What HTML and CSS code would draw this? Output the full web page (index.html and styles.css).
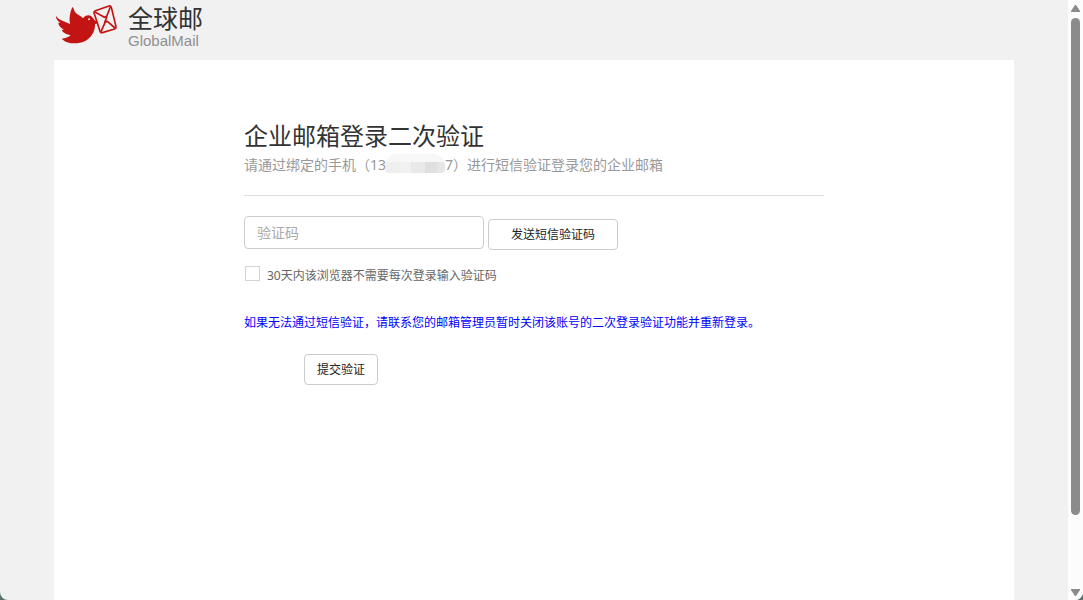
FILE: index.html
```html
<!DOCTYPE html>
<html lang="zh-CN">
<head>
<meta charset="utf-8">
<title>全球邮 GlobalMail</title>
<link rel="stylesheet" href="styles.css">
</head>
<body>
<div class="window">
  <div class="page">
    <header class="header">
      <svg class="dove" viewBox="0 0 198 132" aria-hidden="true">
        <path fill="#c31414" d="M6 36C11 44 20 48 29 52L48 60C45 45 47 26 55 9C61 14 59 21 65 26C71 32 82 36 87 43C92 35 103 31 111 36C117 40 119 47 125 51L133 57L123 61C124 82 111 103 92 112C70 122 37 120 23 104C34 103 44 99 50 94C34 90 26 85 23 78L30 77C18 70 13 63 13 56L19 57C10 50 5 43 6 36Z"/>
        <circle cx="105" cy="46" r="3" fill="#f1f1f1"/>
        <g fill="none" stroke="#c31414" stroke-width="5" stroke-linejoin="round" stroke-linecap="round">
          <path d="M124 20L165 6Q170 5 172 10L186 68Q187 73 182 75L145 86Q140 87 138 82L120 26Q119 22 124 20Z"/>
          <path d="M123 24L151 40L158 37L169 9M141 83L153 56M183 72L160 52L152 56L158 40"/>
        </g>
      </svg>
      <div class="brand">
        <span class="brand-cn">全球邮</span>
        <span class="brand-en">GlobalMail</span>
      </div>
    </header>
    <main class="panel">
      <form class="verify">
        <div class="intro">
          <h1 class="title">企业邮箱登录二次验证</h1>
          <p class="subtitle">请通过绑定的手机（13<span class="mask"></span>7）进行短信验证登录您的企业邮箱</p>
        </div>
        <div class="code-row">
          <input class="code" type="text" placeholder="验证码" aria-label="验证码">
          <button class="btn btn-send" type="button">发送短信验证码</button>
        </div>
        <label class="remember"><input class="check" type="checkbox"><span>30天内该浏览器不需要每次登录输入验证码</span></label>
        <p class="hint">如果无法通过短信验证，请联系您的邮箱管理员暂时关闭该账号的二次登录验证功能并重新登录。</p>
        <button class="btn btn-submit" type="button">提交验证</button>
      </form>
    </main>
  </div>
  <div class="scrollbar" aria-hidden="true">
    <svg class="arrow" viewBox="0 0 9 7"><path d="M4 0h1l4 6v1H0V6Z"/></svg>
    <div class="track"><div class="thumb"></div></div>
    <svg class="arrow" viewBox="0 0 9 7"><path d="M4 7h1l4-6V0H0v1Z"/></svg>
  </div>
</div>
</body>
</html>
```
FILE: styles.css
```css
* { box-sizing: border-box; }

body {
  margin: 0;
  background: #56706c;
  color: #333;
  font: 12px/20px "Noto Sans", "Noto Sans CJK SC", sans-serif;
}

h1, p { margin: 0; }

.window {
  display: flex;
  height: 100vh;
  overflow: hidden;
  background: #f1f1f1;
  border-radius: 0 0 8px 8px;
}

.page {
  flex: 1;
  display: flex;
  flex-direction: column;
  align-items: center;
}

.header, .panel {
  width: 100%;
  max-width: 960px;
}

.header {
  display: flex;
  gap: 8px;
  height: 60px;
  padding-top: 4px;
}

.dove {
  width: 66px;
  height: 44px;
}

.brand {
  display: flex;
  flex-direction: column;
}

.brand-cn {
  font: 25px/30px "Liberation Sans", "Noto Sans CJK SC", sans-serif;
}

.brand-en {
  font: 15px/14px "Liberation Sans", sans-serif;
  color: #909090;
}

.panel {
  flex: 1;
  padding: 58px 190px 0;
  background: #fff;
}

.intro {
  padding-bottom: 19px;
  margin-bottom: 20px;
  border-bottom: 1px solid #ddd;
}

.title {
  font-size: 24px;
  line-height: 36px;
  font-weight: 400;
}

.subtitle {
  font-size: 14px;
  line-height: 22px;
  color: #999;
  white-space: nowrap;
}

.mask {
  display: inline-block;
  width: 60px;
  height: 19px;
  margin-left: -1px;
  vertical-align: top;
  border-radius: 12px 12px 4px 4px;
  background:
    linear-gradient(#f7f7f7, #f7f7f7) 0 0 / 100% 8px no-repeat,
    linear-gradient(90deg, #efefef 14px, #f1f1f1 14px 26px, #e9e9e9 26px 40px, #dfdfdf 40px 52px, #e6e6e6 52px);
}

.code-row {
  display: flex;
  align-items: flex-end;
  gap: 4px;
  height: 34px;
}

.code {
  align-self: flex-start;
  width: 240px;
  height: 33px;
  padding: 0 12px;
  border: 1px solid #ccc;
  border-radius: 4px;
  background: #fff;
  font: inherit;
  font-size: 14px;
}

.code::placeholder { color: #aaa; }

.btn {
  height: 31px;
  padding: 0;
  border: 1px solid #ccc;
  border-radius: 4px;
  background: #fff;
  color: #222;
  font: inherit;
}

.btn-send { width: 130px; }

.btn-submit {
  display: block;
  width: 74px;
  margin: 21px 0 0 60px;
}

.remember {
  display: flex;
  gap: 7px;
  margin-top: 16px;
  line-height: 20px;
  color: #666;
}

.check {
  appearance: none;
  width: 15px;
  height: 15px;
  margin: 0 0 0 1px;
  border: 1px solid #d4d4d4;
  background: #fff;
}

.hint {
  margin-top: 27px;
  color: #00f;
  white-space: nowrap;
}

.scrollbar {
  display: flex;
  flex-direction: column;
  align-items: center;
  width: 15px;
  padding: 5px 0 4px;
  background: #fcfcfc;
}

.arrow {
  width: 9px;
  height: 7px;
  fill: #8b8b8b;
}

.track {
  flex: 1;
  padding-top: 6px;
}

.thumb {
  width: 9px;
  height: 87%;
  border-radius: 5px;
  background: #8b8b8b;
}
```
